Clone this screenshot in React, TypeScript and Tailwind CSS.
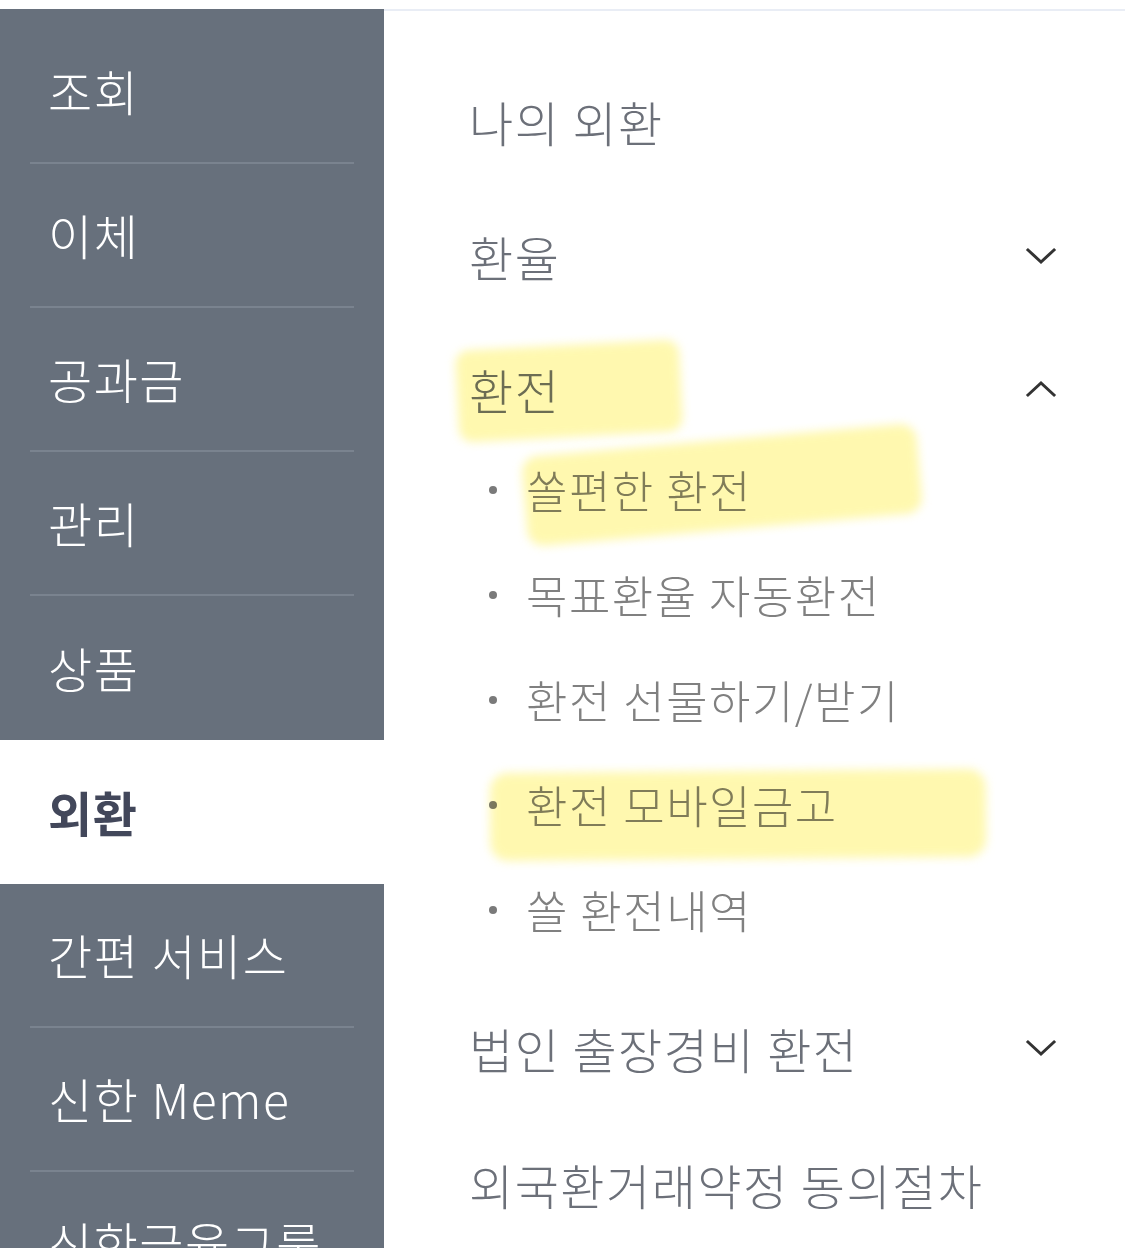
import React from "react";

const sideItems = [
  "조회",
  "이체",
  "공과금",
  "관리",
  "상품",
  "외환",
  "간편 서비스",
  "신한 Meme",
  "신한금융그룹",
];
const activeIndex = 5;

const subItems = [
  "쏠편한 환전",
  "목표환율 자동환전",
  "환전 선물하기/받기",
  "환전 모바일금고",
  "쏠 환전내역",
];

function Chevron({ up }: { up?: boolean }) {
  return (
    <svg width="32" height="18" viewBox="0 0 32 18" fill="none" className="shrink-0">
      <polyline
        points={up ? "3,15 16,3 29,15" : "3,3 16,15 29,3"}
        stroke="#333333"
        strokeWidth="3"
        strokeLinecap="square"
      />
    </svg>
  );
}

export default function App() {
  return (
    <div
      className="relative w-[1125px] h-[1248px] overflow-hidden bg-white pt-[9px] flex"
      style={{ fontFamily: '"Noto Sans CJK KR", "Noto Sans", sans-serif' }}
    >
      {/* Sidebar */}
      <div className="w-[384px] shrink-0 bg-[#67707c] pt-[11px] flex flex-col">
        {sideItems.map((label, i) => {
          const active = i === activeIndex;
          const showLine = !active && i !== activeIndex - 1;
          return (
            <div key={label} className={active ? "h-[144px] shrink-0 bg-white" : "h-[144px] shrink-0"}>
              <div
                className={
                  "mx-[30px] h-full flex items-center pl-[18px] " +
                  (showLine ? "border-b-2 border-[#7a838f]" : "")
                }
              >
                <span
                  className={
                    active
                      ? "text-[48px] font-bold text-[#42475a] tracking-[0.5px] -mt-[2px]"
                      : "text-[48px] font-light text-white tracking-[1.5px] -mt-[2px]"
                  }
                >
                  {label}
                </span>
              </div>
            </div>
          );
        })}
      </div>

      {/* Right pane */}
      <div className="flex-1 border-t-2 border-[#e9edf5] pl-[85px] pr-[68px] pt-[42px] text-[#6c7079]">
        <div className="h-[135px] flex items-center">
          <span className="text-[48px] font-light tracking-[1.5px]">나의 외환</span>
        </div>
        <div className="h-[135px] flex items-center justify-between">
          <span className="text-[48px] font-light tracking-[1.5px]">환율</span>
          <Chevron />
        </div>
        <div className="h-[114px] pt-[18px] flex items-center justify-between">
          <span className="text-[48px] font-light tracking-[1.5px]">환전</span>
          <Chevron up />
        </div>
        <div className="pb-[18px]">
          {subItems.map((s) => (
            <div key={s} className="h-[105px] flex items-center pl-[20px] gap-[29px]">
              <span className="w-[8px] h-[8px] rounded-full bg-[#7a7a7a] shrink-0" />
              <span className="text-[45px] font-light text-[#808080] tracking-[1.5px]">{s}</span>
            </div>
          ))}
        </div>
        <div className="h-[136px] flex items-center justify-between">
          <span className="text-[48px] font-light tracking-[1.5px]">법인 출장경비 환전</span>
          <Chevron />
        </div>
        <div className="h-[136px] flex items-center">
          <span className="text-[48px] font-light tracking-[1.5px]">외국환거래약정 동의절차</span>
        </div>
      </div>

      {/* Highlighter marks */}
      <div className="pointer-events-none absolute left-[457px] top-[345px] w-[224px] h-[92px] rotate-[-3deg] rounded-[14px] bg-[#fff47a] opacity-60 blur-[5px] mix-blend-multiply" />
      <div className="pointer-events-none absolute left-[524px] top-[440px] w-[396px] h-[90px] rotate-[-5deg] rounded-[16px] bg-[#fff47a] opacity-60 blur-[5px] mix-blend-multiply" />
      <div className="pointer-events-none absolute left-[490px] top-[771px] w-[496px] h-[88px] rotate-[-0.5deg] rounded-[18px] bg-[#fff47a] opacity-60 blur-[5px] mix-blend-multiply" />
    </div>
  );
}
